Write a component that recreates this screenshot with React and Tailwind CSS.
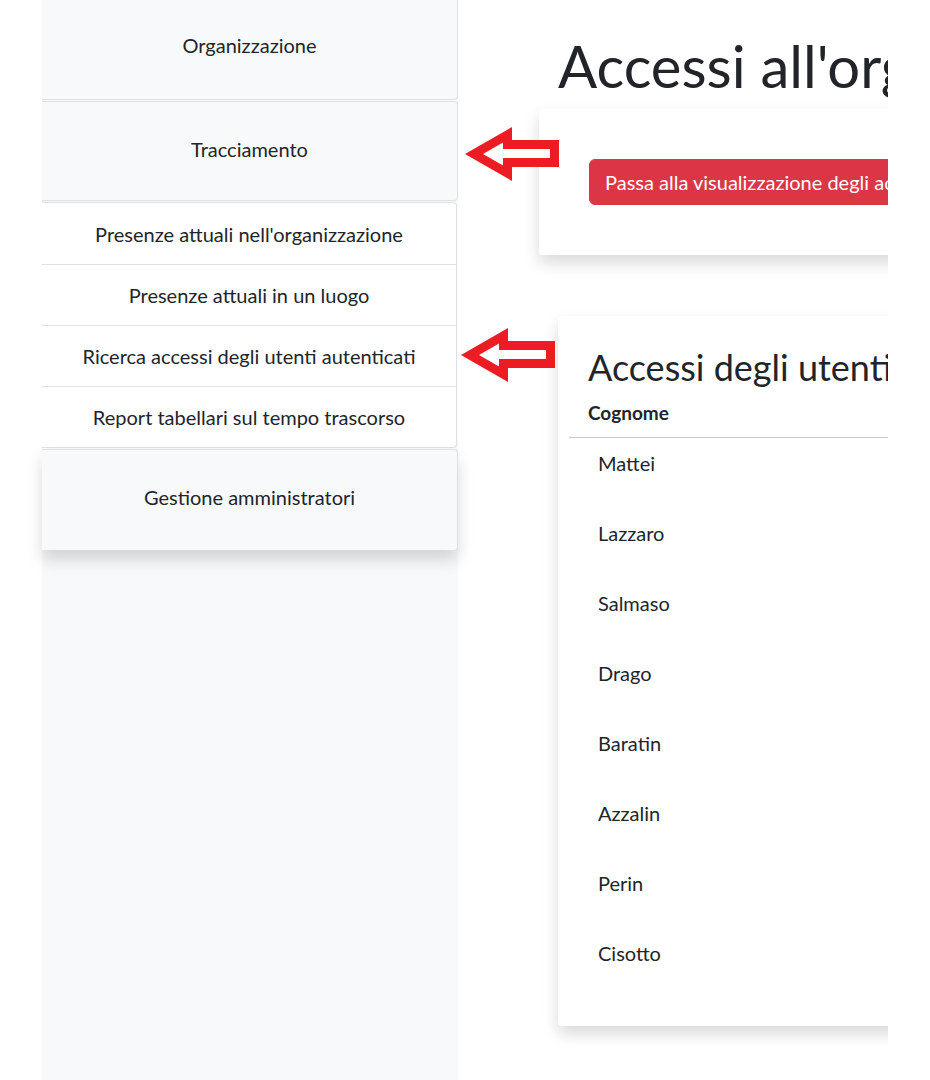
import React from 'react';

const cognomi = ['Mattei', 'Lazzaro', 'Salmaso', 'Drago', 'Baratin', 'Azzalin', 'Perin', 'Cisotto'];

const subMenu = [
  "Presenze attuali nell'organizzazione",
  'Presenze attuali in un luogo',
  'Ricerca accessi degli utenti autenticati',
  'Report tabellari sul tempo trascorso',
];

// freccia rossa di evidenziazione
function Arrow({ className }) {
  return (
    <svg className={className} width="96" height="56" viewBox="0 0 96 56">
      <polygon points="0,27 47,0 47,13 94,13 94,40 47,40 47,54" fill="#ed1c24" />
      <polygon points="18,27 38,15.5 38,22 85,22 85,31 38,31 38,38.5" fill="#ffffff" />
    </svg>
  );
}

export default function App() {
  return (
    <div
      className="relative flex min-h-[1080px] bg-white text-[#212529]"
      style={{ fontFamily: 'Lato, "Open Sans", sans-serif' }}
    >
      <div className="w-[42px] shrink-0" />

      {/* Sidebar */}
      <div className="w-[416px] shrink-0 bg-[#f8f9fa]">
        <div className="flex h-[100px] items-center justify-center rounded-br-[4px] border-r border-b border-[#dfe0e1] bg-[#f8f9fa] pb-[10px] text-[20px]">
          Organizzazione
        </div>
        <div className="mt-[1px] flex h-[100px] items-center justify-center rounded-r-[4px] border-t border-r border-b border-[#dfe0e1] bg-[#f8f9fa] pb-[4px] text-[20px]">
          Tracciamento
        </div>
        <div className="mt-[1px] mr-[1px] rounded-r-[4px] border-t border-r border-b border-[#dfe0e1] bg-white">
          {subMenu.map((item, i) => (
            <div
              key={item}
              className={`flex h-[61px] items-center justify-center text-[20px] ${i > 0 ? 'border-t border-[#dfe0e1]' : ''}`}
            >
              {item}
            </div>
          ))}
        </div>
        <div className="mt-[1px] flex h-[101px] items-center justify-center rounded-r-[4px] border-t border-r border-[#dfe0e1] bg-[#f8f9fa] pb-[6px] text-[20px] shadow-[0_10px_16px_rgba(0,0,0,0.15)]">
          Gestione amministratori
        </div>
      </div>

      {/* Contenuto principale */}
      <div className="w-[430px] shrink-0 overflow-hidden">
        <h1 className="ml-[100px] mt-[31px] whitespace-nowrap text-[58px] leading-[1.2]">
          Accessi all'organizzazione
        </h1>
        <div className="ml-[81px] mt-[8px] w-[600px] rounded-[4px] bg-white p-[50px] shadow-[0_8px_16px_rgba(0,0,0,0.15)]">
          <button className="whitespace-nowrap rounded-[6px] border border-[#dc3545] bg-[#dc3545] px-[15px] py-[7px] text-[20px] leading-[30px] text-white">
            Passa alla visualizzazione degli accessi anonimi
          </button>
        </div>

        <div className="ml-[100px] mt-[61px] mb-[50px] w-[600px] rounded-[4px] bg-white pt-[30px] pb-[28px] shadow-[0_8px_16px_rgba(0,0,0,0.15)]">
          <h3 className="ml-[30px] whitespace-nowrap text-[36px] leading-[1.2]">
            Accessi degli utenti autenticati
          </h3>
          <div className="ml-[11px] mt-[10px] border-b border-[#c8c9ca] pb-[10px] pl-[19px] text-[19px] font-bold">
            Cognome
          </div>
          {cognomi.map((c) => (
            <div key={c} className="ml-[11px] flex h-[70px] items-start pl-[29px] pt-[10px] text-[20px]">
              {c}
            </div>
          ))}
        </div>
      </div>

      <Arrow className="absolute left-[465px] top-[127px]" />
      <Arrow className="absolute left-[461px] top-[328px]" />
    </div>
  );
}
